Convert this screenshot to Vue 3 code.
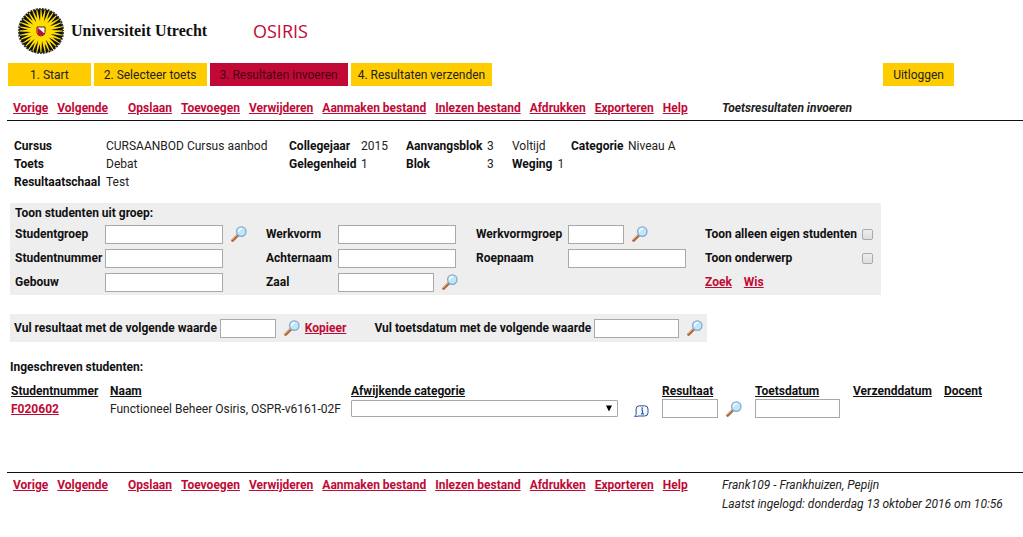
<script setup>
import { h, ref } from 'vue'

const steps = ['1. Start', '2. Selecteer toets', '3. Resultaten invoeren', '4. Resultaten verzenden']
const activeStep = 2

const paging = ['Vorige', 'Volgende']
const actions = [
  'Opslaan', 'Toevoegen', 'Verwijderen', 'Aanmaken bestand',
  'Inlezen bestand', 'Afdrukken', 'Exporteren', 'Help',
]

const ownStudents = ref(false)
const showSubject = ref(false)

const rayCount = 32
const point = (radius, angle) =>
  `${(24 + radius * Math.cos(angle)).toFixed(2)},${(24 + radius * Math.sin(angle)).toFixed(2)}`
const rays = Array.from({ length: rayCount }, (_, i) => {
  const angle = ((i + 0.5) * 2 * Math.PI) / rayCount
  const tip = i % 2 ? 10 : 13
  return `${point(tip, angle)} ${point(22.5, angle - 0.08)} ${point(22.5, angle + 0.08)}`
})

const Loupe = () =>
  h('button', { type: 'button', class: 'loupe', 'aria-label': 'Zoeken' }, [
    h('svg', { viewBox: '0 0 16 16', width: 16, height: 16 }, [
      h('path', { d: 'M1.6 14.4 6.8 9.2', stroke: '#a9683f', 'stroke-width': 2.8, 'stroke-linecap': 'round' }),
      h('path', { d: 'M1.3 13.6 6.2 8.7', stroke: '#f0b070', 'stroke-width': 1, 'stroke-linecap': 'round' }),
      h('circle', { cx: 10.3, cy: 5.6, r: 4.7, fill: '#bfe7fa', stroke: '#86a9cf', 'stroke-width': 1.3 }),
      h('path', { d: 'M7.6 5.6a2.8 2.8 0 0 1 2.9-2.8', fill: 'none', stroke: '#fff', 'stroke-width': 1.4, 'stroke-linecap': 'round' }),
    ]),
  ])
</script>

<template>
  <div class="page">
    <header class="brand">
      <svg class="seal" viewBox="0 0 48 48" width="48" height="48" role="img" aria-label="Universiteit Utrecht">
        <circle cx="24" cy="24" r="22.5" fill="#ffdd00" />
        <polygon v-for="ray in rays" :key="ray" :points="ray" fill="#111" />
        <circle cx="24" cy="24" r="22.3" fill="none" stroke="#222" stroke-width="1.6" />
        <circle cx="24" cy="24" r="22.5" fill="none" stroke="#eee" stroke-width="1.2" stroke-dasharray="1.4 1.6" />
        <path d="M20 20h8v5.500q0 3-4 3.500-4-.5-4-3.500z" fill="#fff" stroke="#5b1a1a" stroke-width="1" />
        <path d="M20.500 20.500 27.500 26.500q-.6 1.600-3.500 2-3.500-.5-3.500-3z" fill="#c00a35" />
      </svg>
      <span class="university">Universiteit Utrecht</span>
      <span class="product">OSIRIS</span>
    </header>

    <nav class="steps">
      <button v-for="(step, i) in steps" :key="step" type="button" class="step" :class="{ active: i === activeStep }">{{ step }}</button>
      <button type="button" class="step logout">Uitloggen</button>
    </nav>

    <div class="menu top">
      <nav class="links">
        <a v-for="item in paging" :key="item" href="#">{{ item }}</a>
        <span class="split"></span>
        <a v-for="item in actions" :key="item" href="#">{{ item }}</a>
      </nav>
      <strong class="status">Toetsresultaten invoeren</strong>
    </div>

    <section class="info">
      <b>Cursus</b><span>CURSAANBOD Cursus aanbod</span>
      <b>Collegejaar</b><span>2015</span>
      <b>Aanvangsblok</b><span>3</span>
      <span>Voltijd</span>
      <b>Categorie</b><span>Niveau A</span>
      <b class="first">Toets</b><span>Debat</span>
      <b>Gelegenheid</b><span>1</span>
      <b>Blok</b><span>3</span>
      <span class="weight"><b>Weging</b>1</span>
      <b class="first">Resultaatschaal</b><span>Test</span>
    </section>

    <form class="panel filter" @submit.prevent>
      <h2>Toon studenten uit groep:</h2>
      <div class="fields">
        <label for="groep">Studentgroep</label>
        <div class="cell"><input id="groep" type="text" class="wide"><Loupe /></div>
        <label for="werkvorm">Werkvorm</label>
        <div class="cell"><input id="werkvorm" type="text" class="wide"></div>
        <label for="wvgroep">Werkvormgroep</label>
        <div class="cell"><input id="wvgroep" type="text" class="short"><Loupe /></div>
        <label for="eigen">Toon alleen eigen studenten</label>
        <input id="eigen" v-model="ownStudents" type="checkbox">

        <label for="nummer">Studentnummer</label>
        <div class="cell"><input id="nummer" type="text" class="wide"></div>
        <label for="achternaam">Achternaam</label>
        <div class="cell"><input id="achternaam" type="text" class="wide"></div>
        <label for="roepnaam">Roepnaam</label>
        <div class="cell"><input id="roepnaam" type="text" class="wide"></div>
        <label for="onderwerp">Toon onderwerp</label>
        <input id="onderwerp" v-model="showSubject" type="checkbox">

        <label for="gebouw">Gebouw</label>
        <div class="cell"><input id="gebouw" type="text" class="wide"></div>
        <label for="zaal">Zaal</label>
        <div class="cell"><input id="zaal" type="text" class="room"><Loupe /></div>
        <div class="search"><a href="#">Zoek</a><a href="#">Wis</a></div>
      </div>
    </form>

    <form class="panel fill" @submit.prevent>
      <label for="waarde">Vul resultaat met de volgende waarde</label>
      <input id="waarde" type="text" class="short"><Loupe />
      <a href="#">Kopieer</a>
      <label for="datum" class="second">Vul toetsdatum met de volgende waarde</label>
      <input id="datum" type="text" class="date"><Loupe />
    </form>

    <h2 class="caption">Ingeschreven studenten:</h2>
    <table class="students">
      <colgroup>
        <col class="c-number"><col class="c-name"><col class="c-category"><col class="c-result"><col class="c-date"><col class="c-sent"><col>
      </colgroup>
      <thead>
        <tr>
          <th>Studentnummer</th><th>Naam</th><th>Afwijkende categorie</th><th>Resultaat</th><th>Toetsdatum</th><th>Verzenddatum</th><th>Docent</th>
        </tr>
      </thead>
      <tbody>
        <tr>
          <td><a href="#">F020602</a></td>
          <td>Functioneel Beheer Osiris, OSPR-v6161-02F</td>
          <td>
            <div class="cell">
              <span class="dropdown">
                <select aria-label="Afwijkende categorie"><option></option></select>
                <svg viewBox="0 0 8 7" width="8" height="7" aria-hidden="true"><path d="M1 0.5h6L4 6.500z" fill="#000" /></svg>
              </span>
              <button type="button" class="note" aria-label="Informatie">
                <svg viewBox="0 0 15 12" width="15" height="12">
                  <path d="M.5 11.3c1.2-.5 1.6-1.3 1.6-2.3V4Q2.100.8 5.3.8h5.400Q14 .8 14 4v3.800Q14 11 10.700 11H5Q3 11.600.5 11.300z" fill="#f5f9ff" stroke="#2a5298" stroke-width="1" />
                  <path d="M7.200 5H8.500V8.700M7 8.900h3" fill="none" stroke="#2463b4" stroke-width="1.200" />
                  <rect x="7.500" y="2.400" width="1.500" height="1.500" fill="#2463b4" />
                </svg>
              </button>
            </div>
          </td>
          <td><div class="cell"><input type="text" class="short" aria-label="Resultaat"><Loupe /></div></td>
          <td><div class="cell"><input type="text" class="date" aria-label="Toetsdatum"></div></td>
          <td></td>
          <td></td>
        </tr>
      </tbody>
    </table>

    <footer class="menu bottom">
      <nav class="links">
        <a v-for="item in paging" :key="item" href="#">{{ item }}</a>
        <span class="split"></span>
        <a v-for="item in actions" :key="item" href="#">{{ item }}</a>
      </nav>
      <div class="status">
        <div>Frank109 - Frankhuizen, Pepijn</div>
        <div>Laatst ingelogd: donderdag 13 oktober 2016 om 10:56</div>
      </div>
    </footer>
  </div>
</template>

<style>
body {
  background: #fff;
}
</style>

<style scoped>
.page {
  padding: 7px 0 20px 7px;
  font: 12px/18px Roboto, "Liberation Sans", Arial, sans-serif;
  color: #222;
  white-space: nowrap;
}
.page * {
  box-sizing: border-box;
}
b,
label,
h2,
th,
a {
  font-weight: bold;
  color: #111;
}
a {
  color: #c00a35;
  text-decoration: underline;
}
h2 {
  margin: 0;
  font-size: 12px;
}
button {
  padding: 0;
  border: 0;
  background: none;
  font: inherit;
  cursor: pointer;
}
.brand {
  display: flex;
  align-items: center;
  height: 48px;
  padding-left: 10px;
}
.university {
  width: 182px;
  margin-left: 6px;
  font: bold 16px/20px "Liberation Serif", "Times New Roman", serif;
  color: #111;
}
.product {
  font: 400 18px/24px "Open Sans", sans-serif;
  color: #c00a35;
}
.steps {
  display: flex;
  gap: 3px;
  margin-top: 8px;
  padding: 0 69px 0 1px;
}
.step {
  height: 23px;
  padding: 0 10px;
  background: #fc0;
  color: #222;
}
.step:first-child {
  padding: 0 22px;
}
.step:nth-child(4) {
  padding: 0 7px;
}
.step.active {
  background: #c00a35;
  color: #4a0014;
}
.step.logout {
  margin-left: auto;
}
.menu {
  display: flex;
  padding-left: 6px;
}
.links {
  display: flex;
  gap: 9px;
  width: 709px;
}
.split {
  width: 2px;
}
.status {
  font-style: italic;
}
.top {
  height: 35px;
  padding-top: 13px;
  border-bottom: 1px solid #111;
}
.info {
  display: grid;
  grid-template-columns: 92px 183px 72px 45px 81px 25px 59px 57px auto;
  margin: 16px 0 0 7px;
}
.first {
  grid-column: 1;
}
.weight b {
  margin-right: 5px;
}
.panel {
  width: max-content;
  margin-left: 3px;
  background: #eee;
}
.filter {
  margin-top: 12px;
  padding: 1px 8px 1px 5px;
}
.fields {
  display: grid;
  grid-template-columns: 90px 161px 72px 138px 92px 137px 157px 11px;
  grid-auto-rows: 24px;
  align-items: center;
}
.cell {
  display: flex;
  align-items: center;
  gap: 8px;
}
input[type="text"] {
  height: 19px;
  margin: 0;
  padding: 0 3px;
  border: 1px solid #a9a9a9;
  background: #fff;
  font: inherit;
}
.wide {
  width: 118px;
}
.short {
  width: 56px;
}
.room {
  width: 96px;
}
.date {
  width: 85px;
}
input[type="checkbox"] {
  appearance: none;
  width: 11px;
  height: 11px;
  margin: 0;
  border: 1px solid #aaa;
  border-radius: 2px;
  background: linear-gradient(#eee, #ddd);
}
input[type="checkbox"]:checked {
  background: #c00a35;
}
.search {
  display: flex;
  grid-column: 7 / 9;
  gap: 12px;
}
:deep(.loupe) {
  width: 16px;
  height: 16px;
  padding: 0;
  border: 0;
  background: none;
}
:deep(.loupe) svg,
.note svg {
  display: block;
}
.fill {
  display: flex;
  align-items: center;
  height: 28px;
  margin-top: 19px;
  padding: 0 4px;
}
.fill input[type="text"] {
  margin: 0 8px 0 3px;
}
.fill a {
  margin-left: 5px;
}
.second {
  margin-left: 28px;
}
.caption {
  margin: 16px 0 7px 3px;
}
.students {
  width: 1000px;
  max-width: 100%;
  margin-left: 4px;
  border-collapse: collapse;
  table-layout: fixed;
}
.students th,
.students td {
  padding: 0;
  text-align: left;
}
.students th {
  line-height: 16px;
  text-decoration: underline;
}
.c-number {
  width: 99px;
}
.c-name {
  width: 241px;
}
.c-category {
  width: 311px;
}
.c-result {
  width: 93px;
}
.c-date {
  width: 98px;
}
.c-sent {
  width: 91px;
}
.dropdown {
  display: grid;
  align-items: center;
  width: 267px;
  margin-right: 8px;
}
.dropdown > * {
  grid-area: 1 / 1;
}
.dropdown svg {
  justify-self: end;
  margin-right: 5px;
  pointer-events: none;
}
.dropdown select {
  appearance: none;
  width: 100%;
  height: 17px;
  padding: 0 16px 0 4px;
  border: 1px solid #a9a9a9;
  border-radius: 1px;
  background: #fff;
  font: inherit;
}
.note {
  align-self: flex-end;
}
.bottom {
  margin-top: 54px;
  padding-top: 3px;
  border-top: 1px solid #111;
}
.bottom .status {
  display: grid;
  gap: 1px;
}
</style>
